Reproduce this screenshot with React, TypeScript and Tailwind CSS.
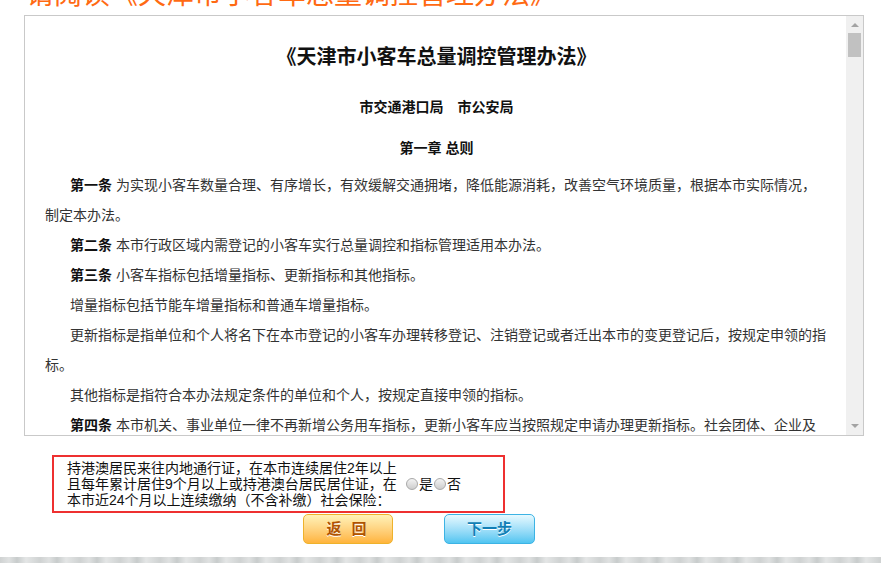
export default function App() {
  const paragraphs: { lead?: string; text: string }[] = [
    {
      lead: "第一条",
      text: "为实现小客车数量合理、有序增长，有效缓解交通拥堵，降低能源消耗，改善空气环境质量，根据本市实际情况，制定本办法。",
    },
    { lead: "第二条", text: "本市行政区域内需登记的小客车实行总量调控和指标管理适用本办法。" },
    { lead: "第三条", text: "小客车指标包括增量指标、更新指标和其他指标。" },
    { text: "增量指标包括节能车增量指标和普通车增量指标。" },
    {
      text: "更新指标是指单位和个人将名下在本市登记的小客车办理转移登记、注销登记或者迁出本市的变更登记后，按规定申领的指标。",
    },
    { text: "其他指标是指符合本办法规定条件的单位和个人，按规定直接申领的指标。" },
    {
      lead: "第四条",
      text: "本市机关、事业单位一律不再新增公务用车指标，更新小客车应当按照规定申请办理更新指标。社会团体、企业及其他组织新增小客车应当申请增量指标。",
    },
  ];

  return (
    <div className="min-h-[563px] bg-white overflow-hidden font-['Liberation_Sans','Noto_Sans_CJK_SC',sans-serif]">
      {/* Page heading, scrolled mostly out of view */}
      <h1 className="-mt-[19px] h-[28px] pl-[26px] text-[28px] leading-[28px] font-normal text-[#ff6a13] whitespace-nowrap">
        请阅读《天津市小客车总量调控管理办法》
      </h1>

      {/* Document box */}
      <div className="ml-[24px] mt-[6px] w-[840px] h-[421px] border border-[#c9c9c9] flex">
        <div className="flex-1 overflow-hidden pl-[20px] pr-[18px] text-[14px] leading-[30px] text-[#333]">
          <div className="mt-[26px] text-center text-[20px] leading-[30px] font-bold text-[#111]">
            《天津市小客车总量调控管理办法》
          </div>
          <div className="mt-[20px] text-center font-bold text-[#111]">市交通港口局　市公安局</div>
          <div className="mt-[11px] text-center font-bold text-[#111]">第一章 总则</div>
          <div className="mt-[7px]">
            {paragraphs.map((p, i) => (
              <p key={i} className="indent-[25px]">
                {p.lead && <b className="font-bold text-[#111]">{p.lead} </b>}
                {p.text}
              </p>
            ))}
          </div>
        </div>

        {/* Scrollbar */}
        <div className="w-[17px] bg-[#f0f0f0] flex flex-col items-center">
          <svg width="8" height="4" viewBox="0 0 8 4" className="mt-[7px]">
            <polygon points="4,0 8,4 0,4" fill="#a3a3a3" />
          </svg>
          <div className="mt-[6px] w-[13px] h-[24px] bg-[#c1c1c1]" />
          <div className="flex-1" />
          <svg width="8" height="4" viewBox="0 0 8 4" className="mb-[7px]">
            <polygon points="0,0 8,0 4,4" fill="#a3a3a3" />
          </svg>
        </div>
      </div>

      {/* Residence question */}
      <div className="ml-[52px] mt-[19px] w-[453px] h-[58px] border-2 border-[#ee3030] flex items-center text-[14px] leading-[16px] text-[#111]">
        <div className="pl-[13px] w-[352px] whitespace-nowrap">
          持港澳居民来往内地通行证，在本市连续居住2年以上
          <br />
          且每年累计居住9个月以上或持港澳台居民居住证，在
          <br />
          本市近24个月以上连续缴纳（不含补缴）社会保险：
        </div>
        <label className="flex items-center">
          <span className="inline-block w-[12px] h-[12px] rounded-full border border-[#a9a9a9] bg-linear-to-b from-[#f3f3f3] to-[#cdcdcd]" />
          <span className="ml-[1px]">是</span>
        </label>
        <label className="flex items-center ml-[1px]">
          <span className="inline-block w-[12px] h-[12px] rounded-full border border-[#a9a9a9] bg-linear-to-b from-[#f3f3f3] to-[#cdcdcd]" />
          <span className="ml-[1px]">否</span>
        </label>
      </div>

      {/* Buttons */}
      <div className="mt-[1px] flex">
        <button className="ml-[303px] w-[90px] h-[30px] rounded-[5px] border border-[#eeb22c] bg-linear-to-b from-[#fff2b8] to-[#ffb43a] text-[15px] font-bold tracking-[3px] text-[#b05300] [text-shadow:0_1px_0_#fff]">
          返 回
        </button>
        <button className="ml-[51px] w-[91px] h-[30px] rounded-[5px] border border-[#3cb3e4] bg-linear-to-b from-[#e6f9ff] to-[#4fc5f1] text-[15px] font-bold text-[#117fb6] [text-shadow:0_1px_0_#fff]">
          下一步
        </button>
      </div>

      {/* Textured footer strip */}
      <div className="mt-[13px] h-[20px] bg-[#d3d6d6] bg-[repeating-linear-gradient(90deg,#cfd2d2_0px,#dfe1e1_9px,#c8cccc_17px,#e4e6e6_26px,#cfd2d2_40px)]" />
    </div>
  );
}
